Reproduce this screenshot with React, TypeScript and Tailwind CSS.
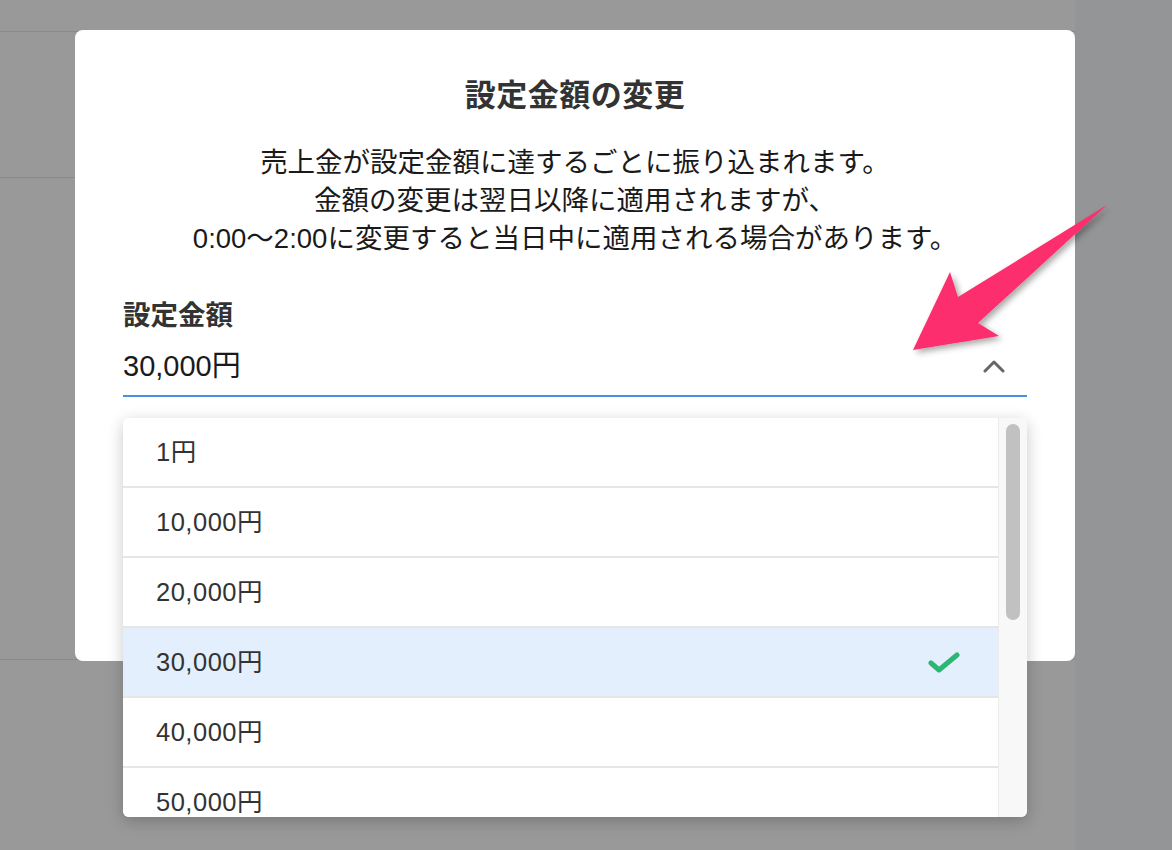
import React from "react";

const amounts = ["1円", "10,000円", "20,000円", "30,000円", "40,000円", "50,000円"];

function Chevron() {
  return (
    <svg width="22" height="14" viewBox="0 0 22 14" fill="none">
      <path d="M2 12 L11 3 L20 12" stroke="#666" strokeWidth="3" strokeLinecap="round" strokeLinejoin="round" />
    </svg>
  );
}

function Check() {
  return (
    <svg width="34" height="24" viewBox="0 0 34 24" fill="none">
      <path d="M3 13 L11 20 L29 5" stroke="#2bb673" strokeWidth="5" strokeLinecap="round" strokeLinejoin="round" />
    </svg>
  );
}

export default function App() {
  const selected = "30,000円";

  return (
    <div
      className="relative h-[850px] w-full overflow-hidden bg-[#999999]"
      style={{ fontFamily: '"Liberation Sans", "Noto Sans CJK JP", sans-serif' }}
    >
      {/* dimmed page behind the dialog */}
      <div className="flex h-full">
        <div className="flex-1">
          <div className="h-[32px] border-b border-[#8a8a8a]" />
          <div className="h-[146px] border-b border-[#8a8a8a]" />
          <div className="h-[482px] border-b border-[#8a8a8a]" />
        </div>
        <div className="w-[97px] bg-[#949597]" />
      </div>

      {/* dialog */}
      <div className="absolute left-[75px] top-[30px] h-[631px] w-[1000px] rounded-lg bg-white px-12 pt-[44px]">
        <h2 className="text-center text-[31px] font-bold leading-[43px] tracking-[0.5px] text-[#333]">
          設定金額の変更
        </h2>
        <p className="mt-[27px] text-center text-[27.5px] leading-[38px] text-[#1a1a1a]">
          売上金が設定金額に達するごとに振り込まれます。
          <br />
          金額の変更は翌日以降に適用されますが、
          <br />
          0:00〜2:00に変更すると当日中に適用される場合があります。
        </p>

        <div className="mt-[39px] text-[27.5px] font-bold leading-[38px] text-[#333]">設定金額</div>

        <div className="relative mt-[12px]">
          <div className="flex items-center justify-between border-b-2 border-[#4a90e2] pb-[10px]">
            <span className="text-[29px] leading-[38px] text-[#1a1a1a]">30,000円</span>
            <span className="mr-[22px] flex items-center">
              <Chevron />
            </span>
          </div>

          {/* open list */}
          <div className="absolute left-0 right-0 top-[calc(100%+21px)] z-10 flex h-[399px] overflow-hidden rounded-md bg-white shadow-[0_4px_16px_rgba(0,0,0,0.22)]">
            <ul className="flex-1">
              {amounts.map((a) => (
                <li
                  key={a}
                  className={
                    "flex h-[70px] items-center justify-between border-b-2 border-[#e6e6e6] pl-[33px] pr-[36px] text-[25.5px] tracking-[0.5px] text-[#333] " +
                    (a === selected ? "bg-[#e3effc]" : "bg-white")
                  }
                >
                  <span>{a}</span>
                  {a === selected && <Check />}
                </li>
              ))}
            </ul>
            <div className="w-[29px] border-l border-[#ececec] bg-[#f8f8f8] px-[7px] pt-[6px]">
              <div className="h-[196px] rounded-full bg-[#c1c1c1]" />
            </div>
          </div>
        </div>
      </div>

      {/* annotation arrow */}
      <svg className="pointer-events-none absolute left-0 top-0 z-20" width="1172" height="850">
        <defs>
          <filter id="sh" x="-20%" y="-20%" width="140%" height="140%">
            <feDropShadow dx="3" dy="3" stdDeviation="3" floodColor="#000" floodOpacity="0.35" />
          </filter>
        </defs>
        <polygon
          points="913,350 950,272 958,297 1107,205 978,323 999,336"
          fill="#fd2d6e"
          filter="url(#sh)"
        />
      </svg>
    </div>
  );
}
